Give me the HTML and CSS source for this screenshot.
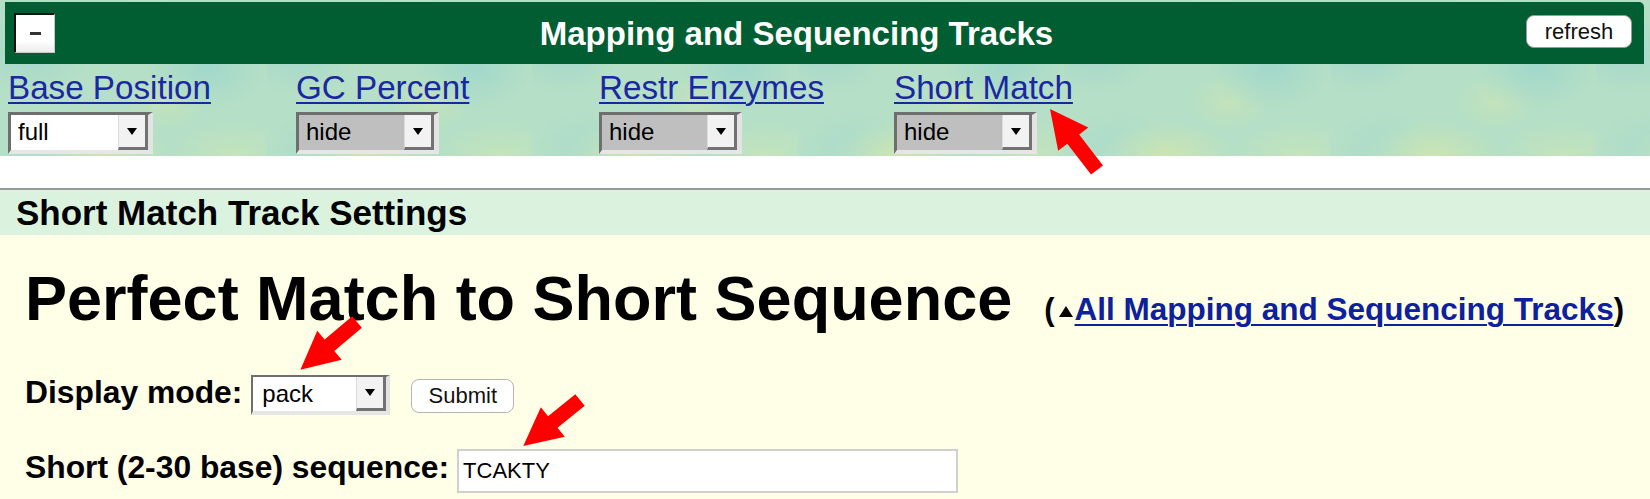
FILE: index.html
```html
<!DOCTYPE html>
<html>
<head>
<meta charset="utf-8">
<title>Short Match Track Settings</title>
<link rel="stylesheet" href="styles.css">
</head>
<body>
<div class="top">
  <div class="bar">
    <div class="minus"><span class="dash"></span></div>
    <div class="bar-title">Mapping and Sequencing Tracks</div>
    <div class="refresh">refresh</div>
  </div>
  <div class="tracks">
    <div class="track">
      <a class="tlink" href="#">Base Position</a>
      <div class="sel sel-wide"><span class="val">full</span><span class="btn"><span class="tri"></span></span></div>
    </div>
    <div class="track">
      <a class="tlink" href="#">GC Percent</a>
      <div class="sel sel-off"><span class="val">hide</span><span class="btn"><span class="tri"></span></span></div>
    </div>
    <div class="track">
      <a class="tlink" href="#">Restr Enzymes</a>
      <div class="sel sel-off"><span class="val">hide</span><span class="btn"><span class="tri"></span></span></div>
    </div>
    <div class="track">
      <a class="tlink" href="#">Short Match</a>
      <div class="sel sel-off"><span class="val">hide</span><span class="btn"><span class="tri"></span></span></div>
    </div>
  </div>
</div>
<div class="gap"></div>
<div class="band">Short Match Track Settings</div>
<div class="content">
  <div class="headrow">
    <h1 class="heading">Perfect Match to Short Sequence</h1>
    <span class="uplink">(<svg class="up" width="14" height="11" viewBox="0 0 14 11"><polygon points="7,0 14,11 0,11" fill="#000"/></svg><a href="#">All Mapping and Sequencing Tracks</a>)</span>
  </div>
  <div class="row row-mode">
    <span class="label">Display mode:</span>
    <div class="sel sel-mode"><span class="val">pack</span><span class="btn"><span class="tri"></span></span></div>
    <div class="submit">Submit</div>
  </div>
  <div class="row row-seq">
    <span class="label">Short (2-30 base) sequence:</span>
    <div class="textbox">TCAKTY</div>
  </div>
</div>
<svg class="arrows" width="1650" height="499" viewBox="0 0 1650 499">
  <polygon fill="#ff0000" points="0,-7.5 39,-7.5 39,-19 77,0 39,19 39,7.5 0,7.5" transform="translate(1097,170) rotate(-127.6)"/>
  <polygon fill="#ff0000" points="0,-7.5 36,-7.5 36,-19 74,0 36,19 36,7.5 0,7.5" transform="translate(357,322) rotate(139.9)"/>
  <polygon fill="#ff0000" points="0,-7.5 35,-7.5 35,-19 73,0 35,19 35,7.5 0,7.5" transform="translate(580,400) rotate(141)"/>
</svg>
</body>
</html>
```

FILE: styles.css
```css
html, body {
  margin: 0;
  padding: 0;
}
body {
  width: 1650px;
  height: 499px;
  overflow: hidden;
  position: relative;
  background: #fffee6;
  font-family: "Liberation Sans", Arial, sans-serif;
  color: #000;
}

/* textured top area */
.top {
  padding: 2px 6px 2px 5px;
  background-color: #b5dfc6;
  background-image:
    radial-gradient(ellipse 70px 34px at 38% 52%, rgba(208,230,174,0.85), rgba(208,230,174,0)),
    radial-gradient(ellipse 60px 45px at 78% 22%, rgba(160,215,204,0.9), rgba(160,215,204,0)),
    radial-gradient(ellipse 55px 40px at 12% 18%, rgba(163,215,205,0.9), rgba(163,215,205,0)),
    radial-gradient(ellipse 65px 35px at 88% 52%, rgba(198,229,186,0.85), rgba(198,229,186,0)),
    radial-gradient(ellipse 45px 30px at 55% 8%, rgba(194,230,198,0.9), rgba(194,230,198,0)),
    radial-gradient(ellipse 50px 40px at 20% 50%, rgba(168,219,206,0.8), rgba(168,219,206,0)),
    radial-gradient(ellipse 40px 28px at 62% 34%, rgba(200,228,182,0.7), rgba(200,228,182,0));
  background-size: 266px 300px;
}

.bar {
  height: 62px;
  background: #005e32;
  border-radius: 0 5px 0 0;
  display: flex;
  align-items: center;
  padding: 0 12px 0 9px;
}
.minus {
  width: 41px;
  height: 40px;
  box-sizing: border-box;
  background: linear-gradient(#ffffff 70%, #ececec);
  border-top: 2px solid #111;
  border-left: 2px solid #111;
  border-right: 1px solid #c8c8c8;
  border-bottom: 1px solid #c8c8c8;
  display: flex;
  align-items: center;
  justify-content: center;
}
.dash {
  width: 11px;
  height: 3px;
  background: #333;
}
.bar-title {
  flex: 1;
  text-align: center;
  padding-left: 12px;
  color: #fff;
  font-weight: bold;
  font-size: 33px;
  line-height: 38px;
  margin-top: 1px;
}
.refresh {
  width: 106px;
  height: 33px;
  box-sizing: border-box;
  margin-top: -3px;
  background: #fff;
  border: 1px solid #9a9a9a;
  border-radius: 8px;
  font-size: 22px;
  line-height: 31px;
  text-align: center;
  color: #111;
}

.tracks {
  display: grid;
  grid-template-columns: 288px 303px 295px 1fr;
  padding: 5px 0 0 3px;
}
.track {
  display: flex;
  flex-direction: column;
  align-items: flex-start;
}
.tlink {
  font-size: 33.2px;
  line-height: 38px;
  color: #1a28a0;
  text-decoration: underline;
  text-decoration-thickness: 2px;
  text-underline-offset: 3px;
}

/* select look-alike */
.sel {
  margin-top: 5px;
  display: flex;
  box-sizing: border-box;
  width: 143px;
  height: 42px;
  border-style: solid;
  border-width: 3px 5px 4px 3px;
  border-color: #6e6e6e #e3e3e3 #e6e6e6 #6e6e6e;
  background: #fff;
}
.sel-wide {
  width: 145px;
}
.sel-off .val {
  background: #bfbfbf;
}
.val {
  flex: 1;
  font-size: 24px;
  line-height: 34px;
  padding-left: 7px;
  color: #000;
}
.btn {
  width: 30px;
  box-sizing: border-box;
  background: #f2f2f2;
  border-right: 3px solid #727272;
  border-bottom: 3px solid #727272;
  border-left: 1px solid #dcdcdc;
  display: flex;
  align-items: center;
  justify-content: center;
}
.tri {
  width: 0;
  height: 0;
  border-left: 5px solid transparent;
  border-right: 5px solid transparent;
  border-top: 7px solid #000;
}

.gap {
  height: 32px;
  background: #fff;
  border-bottom: 2px solid #9a9a9a;
}
.band {
  height: 45px;
  background: #dbf3de;
  padding-left: 16px;
  font-weight: bold;
  font-size: 35px;
  line-height: 46px;
}

.content {
  padding: 27px 0 0 25px;
}
.headrow {
  display: flex;
  align-items: baseline;
}
.heading {
  margin: 0;
  font-size: 63px;
  line-height: 72px;
  font-weight: bold;
}
.uplink {
  margin-left: 32px;
  font-size: 31px;
  font-weight: bold;
}
.up {
  margin: 0 2px 0 4px;
  vertical-align: 3px;
}
.uplink a {
  font-size: 31.5px;
  color: #0d209e;
  text-decoration: underline;
  text-decoration-thickness: 2px;
  text-underline-offset: 4px;
}

.row {
  display: flex;
  align-items: flex-start;
}
.row-mode {
  margin-top: 40px;
}
.row-seq {
  margin-top: 34px;
}
.label {
  font-size: 31.8px;
  font-weight: bold;
  line-height: 36px;
}
.sel-mode {
  margin: 1px 0 0 9px;
  width: 139px;
  height: 40px;
  border-width: 2px 4px 4px 2px;
}
.sel-mode .val {
  line-height: 34px;
  padding-left: 9px;
}
.submit {
  margin: 5px 0 0 21px;
  width: 103px;
  height: 34px;
  box-sizing: border-box;
  background: #fff;
  border: 1px solid #b5b5b5;
  border-radius: 8px;
  font-size: 22px;
  line-height: 32px;
  text-align: center;
  color: #111;
}
.textbox {
  margin-left: 8px;
  width: 501px;
  height: 44px;
  box-sizing: border-box;
  background: #fff;
  border: 2px solid #d0d0d0;
  font-size: 22px;
  line-height: 40px;
  padding-left: 4px;
  color: #000;
}

.arrows {
  position: absolute;
  left: 0;
  top: 0;
  pointer-events: none;
}
```
